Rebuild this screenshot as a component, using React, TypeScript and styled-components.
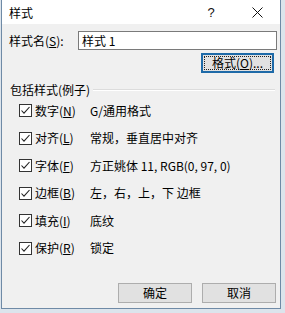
import React from "react";
import styled, { createGlobalStyle } from "styled-components";

const GlobalStyle = createGlobalStyle`
    html, body {
        margin: 0;
        padding: 0;
        background: #dce4ec;
    }
    body {
        font-family: "Noto Sans CJK SC", "Liberation Sans", sans-serif;
        font-size: 12px;
        color: #000;
    }
`;

const Page = styled.div`
    padding: 0 4px 4px 1px;
`;

const Dialog = styled.div`
    width: 280px;
    height: 309px;
    box-sizing: border-box;
    border: 1px solid #6f8aa6;
    border-top: none;
    background: #f0f0f0;
    display: flex;
    flex-direction: column;
`;

const TitleBar = styled.div`
    height: 24px;
    background: #fff;
    display: flex;
    align-items: center;
    padding-left: 7px;
    flex-shrink: 0;
`;

const Title = styled.div`
    flex: 1;
    font-size: 12px;
    line-height: 14px;
    padding-top: 2px;
`;

const TitleButton = styled.div`
    width: 46px;
    height: 24px;
    display: flex;
    align-items: center;
    justify-content: center;
    font-family: "Liberation Sans", sans-serif;
    font-size: 13px;
    color: #111;
`;

const Body = styled.div`
    flex: 1;
    display: flex;
    flex-direction: column;
    padding: 7px 3px 0 7px;
`;

const NameRow = styled.div`
    display: flex;
    align-items: center;
    height: 19px;
`;

const NameLabel = styled.div`
    width: 69px;
    line-height: 14px;
`;

const NameInput = styled.div`
    flex: 1;
    height: 19px;
    box-sizing: border-box;
    border: 1px solid #7a7a7a;
    background: #fff;
    padding-left: 3px;
    line-height: 17px;
`;

const FormatRow = styled.div`
    display: flex;
    justify-content: flex-end;
    padding-right: 3px;
    margin-top: 3px;
`;

const Button = styled.div<{ $focused?: boolean; $width: number }>`
    width: ${({ $width }) => $width}px;
    height: 20px;
    box-sizing: border-box;
    border: ${({ $focused }) => ($focused ? "2px solid #1e6aa8" : "1px solid #adadad")};
    background: #e1e1e1;
    display: flex;
    align-items: stretch;
    padding: ${({ $focused }) => ($focused ? "1px" : "0")};
`;

const ButtonFace = styled.div<{ $dotted?: boolean }>`
    flex: 1;
    display: flex;
    align-items: center;
    justify-content: center;
    line-height: 14px;
    border: ${({ $dotted }) => ($dotted ? "1px dotted #222" : "none")};
`;

const GroupHeader = styled.div`
    display: flex;
    align-items: center;
    height: 14px;
    margin-top: 10px;
    padding-left: 1px;
`;

const GroupTitle = styled.div`
    line-height: 14px;
    padding-right: 3px;
`;

const GroupLine = styled.div`
    flex: 1;
    height: 0;
    border-top: 1px solid #dcdcdc;
    border-bottom: 1px solid #fff;
    margin-right: 2px;
`;

const Rows = styled.div`
    display: grid;
    grid-auto-rows: 27.5px;
    padding-left: 10px;
`;

const Row = styled.div`
    display: flex;
    align-items: center;
`;

const Box = styled.div`
    width: 13px;
    height: 13px;
    box-sizing: border-box;
    border: 1px solid #333;
    background: #fff;
    display: flex;
    align-items: center;
    justify-content: center;
    margin-right: 3px;
`;

const RowLabel = styled.div`
    width: 55px;
    line-height: 14px;
`;

const RowValue = styled.div`
    line-height: 14px;
    white-space: nowrap;
`;

const Key = styled.span`
    text-decoration: underline;
    text-underline-offset: 1px;
`;

const Footer = styled.div`
    display: flex;
    justify-content: flex-end;
    gap: 10px;
    margin-top: 21px;
    padding-right: 1px;
`;

const Check = () => (
    <svg width="11" height="11" viewBox="0 0 11 11">
        <path d="M1.5 5.5 L4 8.2 L9.5 2" fill="none" stroke="#222" strokeWidth="1.1" />
    </svg>
);

const CloseIcon = () => (
    <svg width="11" height="11" viewBox="0 0 11 11">
        <path d="M0.5 0.5 L10.5 10.5 M10.5 0.5 L0.5 10.5" stroke="#111" strokeWidth="1" />
    </svg>
);

type Item = { name: string; key: string; value: string };

const items: Item[] = [
    { name: "数字", key: "N", value: "G/通用格式" },
    { name: "对齐", key: "L", value: "常规，垂直居中对齐" },
    { name: "字体", key: "F", value: "方正姚体 11, RGB(0, 97, 0)" },
    { name: "边框", key: "B", value: "左，右，上，下 边框" },
    { name: "填充", key: "I", value: "底纹" },
    { name: "保护", key: "R", value: "锁定" },
];

export default function App() {
    return (
        <>
            <GlobalStyle />
            <Page>
                <Dialog>
                    <TitleBar>
                        <Title>样式</Title>
                        <TitleButton>?</TitleButton>
                        <TitleButton>
                            <CloseIcon />
                        </TitleButton>
                    </TitleBar>
                    <Body>
                        <NameRow>
                            <NameLabel>
                                样式名(<Key>S</Key>):
                            </NameLabel>
                            <NameInput>样式 1</NameInput>
                        </NameRow>
                        <FormatRow>
                            <Button $focused $width={73}>
                                <ButtonFace $dotted>
                                    格式(<Key>O</Key>)...
                                </ButtonFace>
                            </Button>
                        </FormatRow>
                        <GroupHeader>
                            <GroupTitle>包括样式(例子)</GroupTitle>
                            <GroupLine />
                        </GroupHeader>
                        <Rows>
                            {items.map((it) => (
                                <Row key={it.key}>
                                    <Box>
                                        <Check />
                                    </Box>
                                    <RowLabel>
                                        {it.name}(<Key>{it.key}</Key>)
                                    </RowLabel>
                                    <RowValue>{it.value}</RowValue>
                                </Row>
                            ))}
                        </Rows>
                        <Footer>
                            <Button $width={74}>
                                <ButtonFace>确定</ButtonFace>
                            </Button>
                            <Button $width={74}>
                                <ButtonFace>取消</ButtonFace>
                            </Button>
                        </Footer>
                    </Body>
                </Dialog>
            </Page>
        </>
    );
}
